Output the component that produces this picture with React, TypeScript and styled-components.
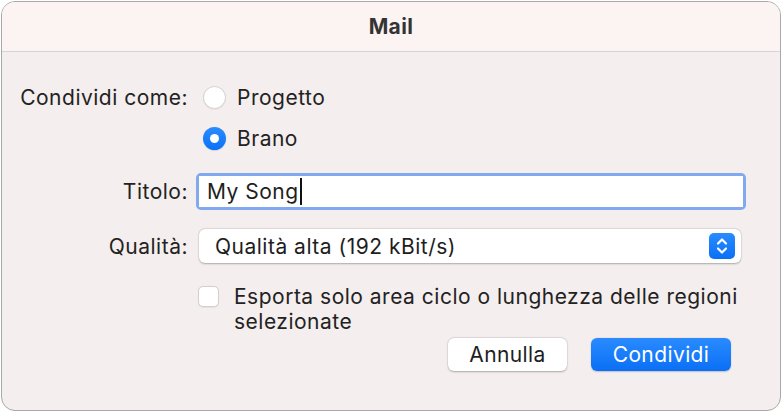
import React from "react";
import styled, { createGlobalStyle } from "styled-components";

const Global = createGlobalStyle`
  html, body { margin: 0; padding: 0; background: #ffffff; }
  body { font-family: Inter, "Liberation Sans", sans-serif; -webkit-font-smoothing: antialiased; }
  * { box-sizing: border-box; }
`;

const Page = styled.div`
  width: 782px;
  height: 412px;
  padding: 1px;
`;

const Window = styled.div`
  width: 780px;
  height: 410px;
  border: 1px solid #a9a7a7;
  border-radius: 14px;
  background: #f4eeee;
  overflow: hidden;
  display: flex;
  flex-direction: column;
`;

const TitleBar = styled.div`
  height: 50px;
  flex: none;
  background: #fcf3f3;
  border-bottom: 1px solid #d9d4d4;
  display: flex;
  align-items: center;
  justify-content: center;
  font-size: 21px;
  font-weight: 700;
  color: #353434;
  letter-spacing: 0.4px;
`;

const Body = styled.div`
  flex: 1;
  display: flex;
  flex-direction: column;
  padding-top: 30px;
  color: #232222;
  font-size: 21px;
  letter-spacing: 0.5px;
`;

const Row = styled.div<{ $mt?: number; $h: number }>`
  display: grid;
  grid-template-columns: 186px 1fr;
  column-gap: 8px;
  align-items: center;
  height: ${(p) => p.$h}px;
  margin-top: ${(p) => p.$mt ?? 0}px;
  padding-right: 34px;
`;

const Label = styled.div`
  text-align: right;
  white-space: nowrap;
`;

const RadioOption = styled.label`
  display: flex;
  align-items: center;
  gap: 11px;
  padding-left: 7px;
`;

const RadioCircle = styled.span<{ $on?: boolean }>`
  width: 23px;
  height: 23px;
  border-radius: 50%;
  flex: none;
  display: flex;
  align-items: center;
  justify-content: center;
  background: ${(p) => (p.$on ? "linear-gradient(#2b8bff, #0a72f7)" : "#ffffff")};
  border: ${(p) => (p.$on ? "none" : "1px solid #d6d2d2")};
  box-shadow: ${(p) => (p.$on ? "0 0.5px 1px rgba(0,0,0,0.2)" : "0 0.5px 1px rgba(0,0,0,0.08)")};
  &::after {
    content: "";
    display: ${(p) => (p.$on ? "block" : "none")};
    width: 9px;
    height: 9px;
    border-radius: 50%;
    background: #ffffff;
  }
`;

const FocusRing = styled.div`
  height: 37px;
  border-radius: 5px;
  padding: 3px;
  background: #80a9f0;
`;

const TextInput = styled.div`
  height: 100%;
  background: #ffffff;
  padding-left: 8px;
  display: flex;
  align-items: center;
  color: #1e1e1e;
`;

const Caret = styled.span`
  display: inline-block;
  width: 2px;
  height: 27px;
  background: #111;
  margin-left: 1px;
`;

const Popup = styled.div`
  margin-left: 3px;
  margin-right: 5px;
  height: 34px;
  background: #ffffff;
  border-radius: 6px;
  box-shadow: 0 0.5px 2px rgba(0, 0, 0, 0.28), 0 0 0 0.5px rgba(0, 0, 0, 0.05);
  display: flex;
  align-items: center;
  justify-content: space-between;
  padding: 0 6px 0 16px;
  color: #1e1e1e;
`;

const Stepper = styled.span`
  width: 26px;
  height: 26px;
  border-radius: 5px;
  background: linear-gradient(#2a8bff, #0a70f6);
  display: flex;
  align-items: center;
  justify-content: center;
`;

const CheckRow = styled.div`
  display: flex;
  align-items: flex-start;
  gap: 15px;
  padding-left: 2px;
`;

const CheckBox = styled.span`
  width: 21px;
  height: 21px;
  flex: none;
  background: #ffffff;
  border: 1px solid #d3cfcf;
  border-radius: 5px;
  box-shadow: 0 0.5px 1px rgba(0, 0, 0, 0.06);
  margin-top: 2px;
`;

const CheckText = styled.div`
  line-height: 25px;
`;

const ButtonBar = styled.div`
  display: flex;
  justify-content: flex-end;
  gap: 24px;
  padding-right: 49px;
  margin-top: 4px;
`;

const Button = styled.button<{ $primary?: boolean; $w: number }>`
  width: ${(p) => p.$w}px;
  height: 33px;
  border: none;
  border-radius: 6px;
  font-family: inherit;
  font-size: 21px;
  letter-spacing: 0.4px;
  color: ${(p) => (p.$primary ? "#ffffff" : "#1e1e1e")};
  background: ${(p) => (p.$primary ? "linear-gradient(#2a8bff, #0a6ff5)" : "#ffffff")};
  box-shadow: ${(p) =>
    p.$primary
      ? "0 0.5px 1.5px rgba(0,0,0,0.2)"
      : "0 0.5px 2px rgba(0,0,0,0.28), 0 0 0 0.5px rgba(0,0,0,0.05)"};
  padding: 0;
`;

export default function App() {
  return (
    <Page>
      <Global />
      <Window>
        <TitleBar>Mail</TitleBar>
        <Body>
          <Row $h={30}>
            <Label>Condividi come:</Label>
            <RadioOption>
              <RadioCircle />
              Progetto
            </RadioOption>
          </Row>
          <Row $h={30} $mt={11}>
            <span />
            <RadioOption>
              <RadioCircle $on />
              Brano
            </RadioOption>
          </Row>
          <Row $h={37} $mt={20}>
            <Label>Titolo:</Label>
            <FocusRing>
              <TextInput>
                My Song
                <Caret />
              </TextInput>
            </FocusRing>
          </Row>
          <Row $h={34} $mt={19}>
            <Label>Qualità:</Label>
            <Popup>
              Qualità alta (192 kBit/s)
              <Stepper>
                <svg width="12" height="18" viewBox="0 0 12 18" fill="none">
                  <path d="M2 6.5 L6 2.5 L10 6.5" stroke="#fff" strokeWidth="2.2" strokeLinecap="round" strokeLinejoin="round" />
                  <path d="M2 11.5 L6 15.5 L10 11.5" stroke="#fff" strokeWidth="2.2" strokeLinecap="round" strokeLinejoin="round" />
                </svg>
              </Stepper>
            </Popup>
          </Row>
          <Row $h={50} $mt={21}>
            <span />
            <CheckRow>
              <CheckBox />
              <CheckText>
                Esporta solo area ciclo o lunghezza delle regioni
                <br />
                selezionate
              </CheckText>
            </CheckRow>
          </Row>
          <ButtonBar>
            <Button $w={119}>Annulla</Button>
            <Button $w={140} $primary>
              Condividi
            </Button>
          </ButtonBar>
        </Body>
      </Window>
    </Page>
  );
}
